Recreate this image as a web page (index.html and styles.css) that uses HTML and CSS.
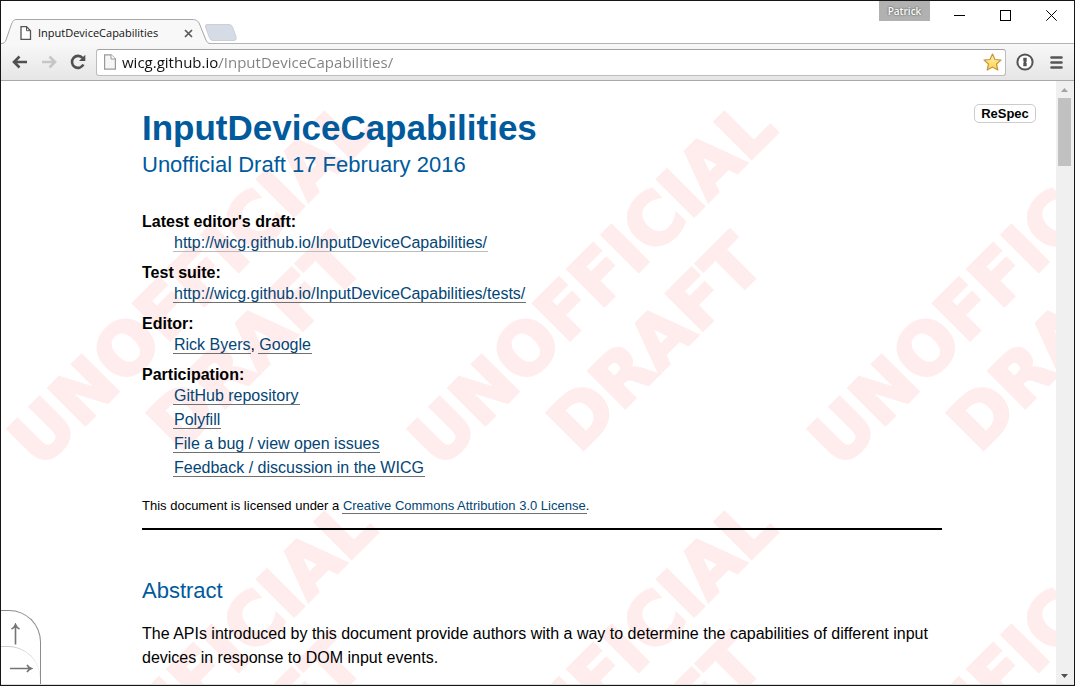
FILE: index.html
```html
<!DOCTYPE html>
<html lang="en">
<head>
<meta charset="utf-8">
<title>InputDeviceCapabilities</title>
<link rel="stylesheet" href="styles.css">
</head>
<body>
<div class="window">
  <header class="titlebar">
    <div class="tabs">
      <div class="tab">
        <svg class="tab-shape" width="210" height="25" viewBox="0 0 210 25" aria-hidden="true">
          <path d="M0 24.5C3 24.5 4 23.500 5 21L10.500 5C12 1.500 13 .5 16 .5H191C195 .5 197 1.500 198.500 5L204.500 20C206 23.500 207 24.500 210 24.500V25H0Z" fill="#f8f8f8"/>
          <path d="M0 24.500C3 24.500 4 23.500 5 21L10.500 5C12 1.500 13 .5 16 .5H191C195 .5 197 1.500 198.500 5L204.500 20C206 23.500 207 24.500 210 24.500" fill="none" stroke="#a6a6a6"/>
        </svg>
        <svg class="tab-icon" width="12" height="14" viewBox="0 0 12 14" aria-hidden="true">
          <path d="M1 .7H6.500L10.500 4.700V13.300H1Z" fill="#fff" stroke="#555" stroke-width="1.300"/>
          <path d="M6.500 .7V4.700H10.500" fill="none" stroke="#555"/>
        </svg>
        <span class="tab-title">InputDeviceCapabilities</span>
        <button class="tab-close" aria-label="Close tab">
          <svg width="9" height="9" viewBox="0 0 9 9"><path d="M1 1L8 8M8 1L1 8" stroke="#5a5a5a" stroke-width="1.700"/></svg>
        </button>
      </div>
      <button class="new-tab" aria-label="New tab">
        <svg width="34" height="17" viewBox="0 0 34 17"><path d="M3 .5H25Q27.500 .5 28.500 3L32 12.500Q33 16.500 30 16.500H9Q6.500 16.500 5.500 14L1.500 3Q.8 .5 3 .5Z" fill="#d6dce5" stroke="#cbcfd6"/></svg>
      </button>
    </div>
    <div class="window-controls">
      <button class="profile">Patrick</button>
      <button class="control" aria-label="Minimize"><svg width="11" height="11" viewBox="0 0 11 11"><path d="M0 5.500H11" stroke="#000"/></svg></button>
      <button class="control" aria-label="Maximize"><svg width="11" height="11" viewBox="0 0 11 11"><rect x=".5" y=".5" width="10" height="10" fill="none" stroke="#000"/></svg></button>
      <button class="control" aria-label="Close"><svg width="11" height="11" viewBox="0 0 11 11"><path d="M.3 .3L10.700 10.700M10.700 .3L.3 10.700" stroke="#000"/></svg></button>
    </div>
  </header>

  <div class="toolbar">
    <div class="nav-buttons">
      <button aria-label="Back"><svg width="16" height="14" viewBox="0 0 16 14"><path d="M15 7H2M7.500 1.500L2 7L7.500 12.500" fill="none" stroke="#505050" stroke-width="2.600"/></svg></button>
      <button aria-label="Forward"><svg width="16" height="14" viewBox="0 0 16 14"><path d="M1 7H14M8.500 1.500L14 7L8.500 12.500" fill="none" stroke="#c6c6c6" stroke-width="2.600"/></svg></button>
      <button aria-label="Reload"><svg width="16" height="16" viewBox="0 0 16 16"><path d="M12.600 4A6 6 0 1 0 13.400 10.500" fill="none" stroke="#505050" stroke-width="2.600"/><path d="M15.300 .8V7H9Z" fill="#505050"/></svg></button>
    </div>
    <div class="omnibox">
      <svg width="12" height="16" viewBox="0 0 12 16" aria-hidden="true">
        <path d="M.6 .8H7L11.400 5V15.200H.6Z" fill="#f6f6f6" stroke="#999" stroke-width="1.200"/>
        <path d="M7 .8V5H11.400" fill="#fff" stroke="#999"/>
      </svg>
      <input class="address" type="text" aria-label="Address" value="wicg.github.io/InputDeviceCapabilities/">
      <button aria-label="Bookmark this page"><svg width="19" height="18" viewBox="0 0 19 18"><defs><linearGradient id="star" x1="0" y1="0" x2="0" y2="1"><stop offset="0" stop-color="#fff3b4"/><stop offset="1" stop-color="#fbd449"/></linearGradient></defs><path d="M9.500 1L12 6.500L18 7.100L13.500 11L14.800 17L9.500 14L4.200 17L5.500 11L1 7.100L7 6.500Z" fill="url(#star)" stroke="#cb9440" stroke-width="1.200" stroke-linejoin="round"/></svg></button>
    </div>
    <button class="extension" aria-label="Password manager"><svg width="18" height="18" viewBox="0 0 18 18"><circle cx="9" cy="9" r="7.600" fill="#fff" stroke="#555" stroke-width="2"/><path d="M7.300 4.800H10.700V8.500L9.900 9.200L10.700 9.900V13.200H7.300V9.800L8.100 9L7.300 8.300Z" fill="#555"/></svg></button>
    <button class="menu" aria-label="Menu"><svg width="15" height="14" viewBox="0 0 15 14"><path d="M2.500 2.500H12.500M2.500 7.500H12.500M2.500 12.500H12.500" stroke="#555" stroke-width="2.600" stroke-linecap="round"/></svg></button>
  </div>

  <div class="viewport">
    <div class="page">
      <svg class="watermark" aria-hidden="true">
        <defs>
          <pattern id="draft" width="400" height="400" patternUnits="userSpaceOnUse">
            <text class="stamp" transform="translate(39 389) rotate(-45)">UNOFFICIAL</text>
            <text class="stamp" transform="translate(178 373) rotate(-45)">DRAFT</text>
          </pattern>
        </defs>
        <rect width="100%" height="100%" fill="url(#draft)"/>
      </svg>
      <main class="document">
        <h1>InputDeviceCapabilities</h1>
        <p class="subtitle">Unofficial Draft 17 February 2016</p>
        <dl>
          <dt>Latest editor's draft:</dt>
          <dd><a class="current" href="#">http://wicg.github.io/InputDeviceCapabilities/</a></dd>
          <dt>Test suite:</dt>
          <dd><a href="#">http://wicg.github.io/InputDeviceCapabilities/tests/</a></dd>
          <dt>Editor:</dt>
          <dd><a href="#">Rick Byers</a>, <a href="#">Google</a></dd>
          <dt>Participation:</dt>
          <dd><a href="#">GitHub repository</a></dd>
          <dd><a href="#">Polyfill</a></dd>
          <dd><a href="#">File a bug / view open issues</a></dd>
          <dd><a href="#">Feedback / discussion in the WICG</a></dd>
        </dl>
        <p class="license">This document is licensed under a <a href="#">Creative Commons Attribution 3.0 License</a>.</p>
        <hr>
        <h2>Abstract</h2>
        <p class="abstract">The APIs introduced by this document provide authors with a way to determine the capabilities of different input devices in response to DOM input events.</p>
      </main>
      <button class="respec">ReSpec</button>
      <nav class="jump">
        <button class="jump-up" aria-label="Go to top"><svg width="11" height="22" viewBox="0 0 11 22"><path d="M5.500 21.500V2M1.500 6Q4.500 4.500 5.500 1.500Q6.500 4.500 9.500 6" fill="none" stroke="#747474" stroke-width="1.600"/></svg></button>
        <button class="jump-toc" aria-label="Show contents"><svg width="23" height="11" viewBox="0 0 23 11"><path d="M0 5.500H21M17 2Q18.500 4.500 21.500 5.500Q18.500 6.500 17 9" fill="none" stroke="#747474" stroke-width="1.600"/></svg></button>
      </nav>
    </div>
    <div class="scrollbar">
      <button aria-label="Scroll up"><svg width="7" height="4" viewBox="0 0 7 4"><path d="M0 4L3.500 0L7 4Z" fill="#a3a3a3"/></svg></button>
      <div class="track"><div class="thumb"></div></div>
      <button aria-label="Scroll down"><svg width="7" height="4" viewBox="0 0 7 4"><path d="M0 0L3.500 4L7 0Z" fill="#505050"/></svg></button>
    </div>
  </div>
</div>
</body>
</html>
```
FILE: styles.css
```css
* { box-sizing: border-box; }

body {
  margin: 0;
  font-family: "Liberation Sans", Arial, sans-serif;
  font-size: 16px;
  color: #000;
}

button {
  border: 0;
  padding: 0;
  background: none;
  font: inherit;
  color: inherit;
}

svg { display: block; }

.window {
  display: flex;
  flex-direction: column;
  height: 100vh;
  border: 1px solid #161616;
  background: #fff;
}

/* Title bar */
.titlebar {
  display: flex;
  justify-content: space-between;
  height: 43px;
  flex: none;
  border-bottom: 1px solid #b4b4b4;
  font-family: "Open Sans", "Noto Sans", sans-serif;
}

.tabs {
  display: flex;
  align-items: flex-end;
  margin-bottom: -1px;
}

.tab {
  position: relative;
  display: flex;
  align-items: center;
  width: 203px;
  height: 24px;
  padding: 2px 11px 0 19px;
  font-size: 11px;
  line-height: 20px;
}

.tab-shape {
  position: absolute;
  left: 0;
  bottom: 0;
}

.tab-icon, .tab-title, .tab-close { position: relative; }

.tab-title {
  flex: 1;
  padding-left: 6px;
  color: #111;
}

.new-tab { padding-bottom: 3px; }

.window-controls {
  display: flex;
  align-items: flex-start;
}

.profile {
  width: 51px;
  height: 20px;
  margin-right: 6px;
  background: #b1b1b1;
  color: #fff;
  font-size: 10px;
  font-weight: 600;
  line-height: 20px;
  text-shadow: 0 0 2px #333;
}

.control {
  display: grid;
  place-items: center;
  width: 46px;
  height: 28px;
}

/* Toolbar */
.toolbar {
  display: flex;
  align-items: center;
  flex: none;
  height: 37px;
  padding: 0 10px 0 11px;
  border-bottom: 1px solid #a9a9a9;
  background: linear-gradient(#f8f8f8, #e6e6e6);
}

.nav-buttons {
  display: flex;
  align-items: center;
  gap: 13px;
}

.omnibox {
  display: flex;
  align-items: center;
  flex: 1;
  height: 27px;
  margin: 0 10px;
  padding: 0 3px 0 7px;
  border: 1px solid #bcbcbc;
  border-top-color: #a2a2a2;
  border-radius: 3px;
  background: #fff;
}

.address {
  flex: 1;
  min-width: 0;
  height: 24px;
  margin-left: 6px;
  padding: 0;
  border: 0;
  outline: 0;
  background: linear-gradient(90deg, #111 97px, #808080 97px);
  background-clip: text;
  color: transparent;
  font-family: "Open Sans", "Noto Sans", sans-serif;
  font-size: 15px;
}

.menu { margin-left: 15px; }

/* Viewport */
.viewport {
  display: flex;
  flex: 1;
  min-height: 0;
  border-bottom: 1px solid #ddd;
}

.page {
  position: relative;
  flex: 1;
  min-width: 0;
  overflow: hidden;
}

.watermark {
  position: absolute;
  inset: 0;
  width: 100%;
  height: 100%;
}

.stamp {
  fill: #ffecec;
  stroke: #ffecec;
  stroke-width: 3px;
  font-family: "DejaVu Sans", sans-serif;
  font-size: 71px;
  font-weight: bold;
}

.document {
  position: relative;
  max-width: 875px;
  margin: 0 auto;
  padding: 27px 24px 32px 51px;
}

h1, h2, p, dl, dd { margin: 0; }

h1, h2, .subtitle { color: #005a9c; }

h1 {
  font-size: 35px;
  line-height: 40px;
}

.subtitle {
  margin-top: 3px;
  font-size: 22px;
  line-height: 28px;
}

dl { margin-top: 34px; }

dt {
  font-weight: bold;
  line-height: 18px;
}

dd + dt { margin-top: 9px; }

dd {
  padding-left: 32px;
  line-height: 24px;
}

a {
  margin: 0 -1px;
  padding: 0 1px;
  border-bottom: 1px solid #707070;
  color: #034575;
  text-decoration: none;
}

.current { border-bottom-color: #bbb; }

.license {
  margin-top: 16px;
  font-size: 13px;
  line-height: 20px;
}

hr {
  height: 2px;
  margin: 12px 0 47px;
  border: 0;
  background: #000;
}

h2 {
  font-size: 22px;
  font-weight: normal;
  line-height: 28px;
}

.abstract {
  margin-top: 17px;
  line-height: 24px;
}

.respec {
  position: absolute;
  top: 23px;
  right: 20px;
  width: 62px;
  height: 19px;
  border: 1px solid #ccc;
  border-radius: 5px;
  background: #fff;
  font-size: 13px;
  font-weight: bold;
  line-height: 17px;
}

.jump {
  position: absolute;
  left: 0;
  bottom: 0;
  width: 40px;
  border: 1px solid #8c8c8c;
  border-width: 1px 1px 0 0;
  border-radius: 0 32px 0 0;
  background: #fff;
}

.jump button {
  display: block;
  width: 39px;
}

.jump-up {
  height: 35px;
  padding: 10px 0 0 9px;
}

.jump-toc {
  height: 38px;
  padding: 6px 0 0 9px;
  border-top: 1px solid #ccc;
  border-radius: 0 32px 0 0;
}

/* Scroll bar */
.scrollbar {
  display: flex;
  flex-direction: column;
  width: 18px;
  padding-right: 1px;
  background: #f0f0f0;
}

.scrollbar button {
  display: grid;
  place-items: center;
  height: 17px;
}

.track {
  flex: 1;
  padding: 0 2px;
}

.thumb {
  height: 12%;
  background: #c1c1c1;
}
```
